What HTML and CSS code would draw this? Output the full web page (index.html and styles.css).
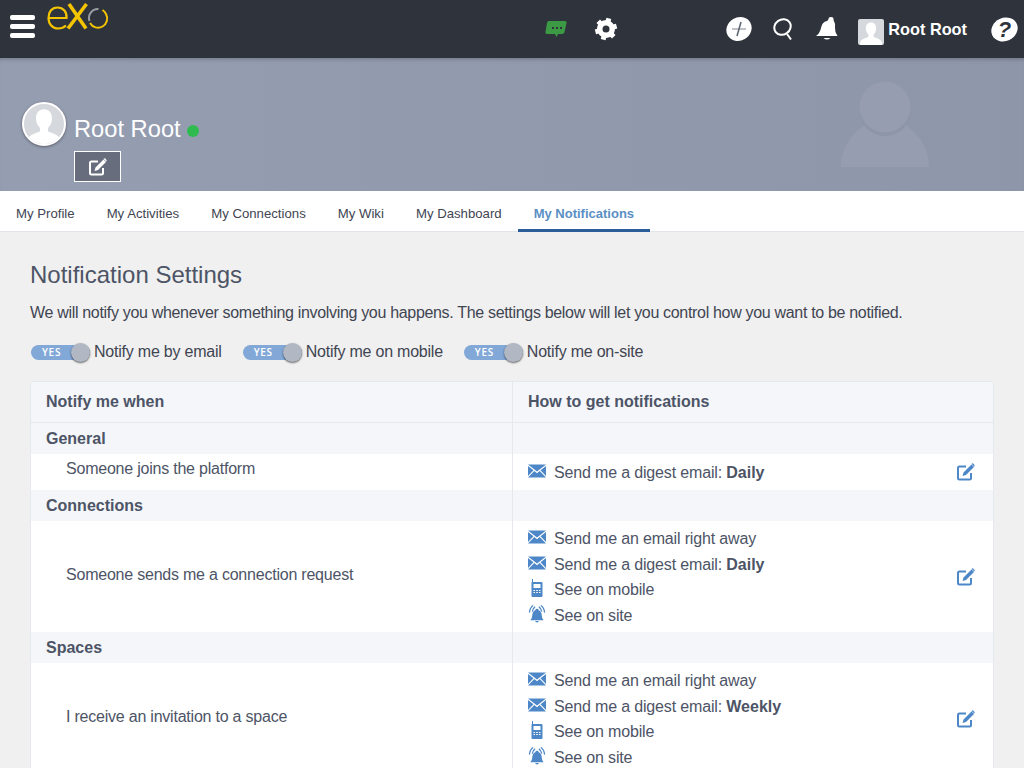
FILE: index.html
```html
<!DOCTYPE html>
<html lang="en">
<head>
	<meta charset="UTF-8">
	<title>Notification Settings</title>
	<link rel="stylesheet" href="styles.css">
</head>
<body>
	<svg class="defs" width="0" height="0">
		<symbol id="mail" viewBox="0 0 18 13">
			<path d="M0 0h18L9 7z"/>
			<path d="M0 1.500v10l5.500-5.700zM18 1.500v10l-5.500-5.700zM6.300 6.600L9 8.800l2.700-2.200L18 13H0z"/>
		</symbol>
		<symbol id="phone" viewBox="0 0 14 18">
			<path fill-rule="evenodd" d="M2 0h1v3h8.500q1 0 1 1v13q0 1-1 1h-9q-1 0-1-1V4q0-.7.500-.9zM3.500 5v4h7V5zM3.500 11v1h1.500v-1zM6.200 11v1h1.600v-1zM9 11v1h1.500v-1zM3.500 13v1h1.500v-1zM6.200 13v1h1.600v-1zM9 13v1h1.500v-1z"/>
		</symbol>
		<symbol id="alarm" viewBox="0 0 18 19">
			<path d="M9 4q1.500 0 1.800 1.500Q14 7 14 11q0 3 2 5H2q2-2 2-5 0-4 3.200-5.500Q7.500 4 9 4zM7 17h4q-.5 1.500-2 1.500T7 17z"/>
			<path class="wave" d="M4 7Q4.500 3.500 7 2M14 7q-.5-3.500-3-5M1 8Q1.500 2.500 5 .5M17 8q-.5-5.500-4-7.500"/>
		</symbol>
		<symbol id="edit" viewBox="0 0 18 18">
			<path class="box" d="M14 10v5q0 1.500-1.500 1.500h-10Q1 16.500 1 15V5q0-1.500 1.500-1.500H9"/>
			<path d="M14.500 1.500l2.500 2.500-8 8-3.500 1 1-3.500zM15 .6q.6-.6 1.200 0l1.300 1.300q.5.6 0 1.200l-.4.4-2.500-2.500z"/>
		</symbol>
		<symbol id="person" viewBox="0 0 60 60">
			<path d="M30 8c-8 0-12 6-12 14 0 6 3 11 6 14v5c-4 3-16 4-19 13v6h50v-6c-3-9-15-10-19-13v-5c3-3 6-8 6-14 0-8-4-14-12-14z"/>
		</symbol>
	</svg>

	<header class="topbar">
		<div class="top-left">
			<div class="burger"><i></i><i></i><i></i></div>
			<svg class="logo" width="62" height="32" viewBox="0 0 62 32">
				<path d="M1.500 18h18c.5-6-3-10.500-9-10.500S1.500 12 1.500 18s4 10.500 9.500 10.500c3 0 6-1 8-3" fill="none" stroke="#f5c400" stroke-width="2.200"/>
				<path d="M22 4l17 24.500M39.500 4L21 28.500" fill="none" stroke="#f5c400" stroke-width="3.600"/>
				<path d="M42.500 21a9 9 0 0 1 9-12" fill="none" stroke="#9a9da3" stroke-width="2"/>
				<path d="M43 23a9 9 0 0 0 16-9 9 9 0 0 0-3.500-4" fill="none" stroke="#f5c400" stroke-width="2"/>
			</svg>
		</div>
		<div class="top-mid">
			<svg class="chat" width="22" height="18" viewBox="0 0 22 18">
				<path d="M4 1h16q2 0 1.500 2l-2 9q-.5 2-2.500 2h-4l-1.500 3-1.500-3H2q-2 0-1.500-2l1.500-9q.3-2 2-2z" fill="#3c9a45"/>
				<path d="M7 7h2v2H7zM11 7h2v2h-2zM15 7h2v2h-2z" fill="#2f343c"/>
			</svg>
			<svg class="gear" width="24" height="24" viewBox="0 0 24 24">
				<circle cx="12" cy="12" r="6.500" fill="none" stroke="#fff" stroke-width="5"/>
				<g transform="rotate(15 12 12)">
					<path d="M12 12L12 1M12 12L21.500 6.500M12 12L21.500 17.500M12 12L12 23M12 12L2.500 17.500M12 12L2.500 6.500" stroke="#fff" stroke-width="5"/>
				</g>
				<circle cx="12" cy="12" r="3.500" fill="#2f343c"/>
			</svg>
		</div>
		<div class="top-right">
			<svg width="26" height="26" viewBox="0 0 26 26">
				<ellipse cx="13" cy="13" rx="13" ry="11.500" transform="rotate(-30 13 13)" fill="#fff"/>
				<path d="M6 13h14" stroke="#a9adb3" stroke-width="1.500"/>
				<path d="M15 6l-4 14" stroke="#5b6270" stroke-width="1.500"/>
			</svg>
			<svg class="t-search" width="20" height="24" viewBox="0 0 20 24">
				<ellipse cx="9.500" cy="10" rx="8.500" ry="7.500" transform="rotate(-35 9.500 10)" fill="none" stroke="#fff" stroke-width="2"/>
				<path d="M14 17l4 5.500" stroke="#fff" stroke-width="2"/>
			</svg>
			<svg class="t-bell" width="22" height="26" viewBox="0 0 22 26">
				<path d="M15 1q3 0 2.500 3 2 3 1.500 8-.3 4 2.500 8H0q4-3 5-8 1-6 6-7 1.500-1 2-3.500z" fill="#fff"/>
				<path d="M7.500 22h7q-3.500 3-7 0z" fill="#fff"/>
			</svg>
			<div class="t-user">
				<svg class="t-avatar" width="26" height="26" viewBox="0 0 60 60"><use href="#person"/></svg>
				<span class="t-name">Root Root</span>
			</div>
			<div class="t-help"><span>?</span></div>
		</div>
	</header>

	<section class="banner">
		<svg class="ghost" width="88" height="88" viewBox="0 0 88 88">
			<path d="M0 86c0-22 14-36 26-44 10 9 26 9 36 0 12 8 26 22 26 44z" fill="#969db0"/>
			<circle cx="44" cy="29" r="26" fill="#8d95a8"/>
			<circle cx="44" cy="26" r="25.500" fill="#969db0"/>
		</svg>
		<div class="who">
			<div class="avatar">
				<svg width="40" height="40" viewBox="0 0 60 60"><use href="#person"/></svg>
			</div>
			<div class="who-text">
				<div class="who-name">Root Root<span class="dot"></span></div>
				<div class="edit-btn"><svg width="18" height="18"><use href="#edit"/></svg></div>
			</div>
		</div>
	</section>

	<nav class="tabs">
		<a>My Profile</a>
		<a>My Activities</a>
		<a>My Connections</a>
		<a>My Wiki</a>
		<a>My Dashboard</a>
		<a class="active">My Notifications</a>
	</nav>

	<main class="content">
		<h1>Notification Settings</h1>
		<p class="intro">We will notify you whenever something involving you happens. The settings below will let you control how you want to be notified.</p>
		<div class="switches">
			<div class="switch"><span class="toggle"><b>YES</b><i></i></span>Notify me by email</div>
			<div class="switch"><span class="toggle"><b>YES</b><i></i></span>Notify me on mobile</div>
			<div class="switch"><span class="toggle"><b>YES</b><i></i></span>Notify me on-site</div>
		</div>

		<div class="grid">
			<div class="row head">
				<div class="cell">Notify me when</div>
				<div class="cell">How to get notifications</div>
			</div>

			<div class="row group">
				<div class="cell">General</div>
				<div class="cell"></div>
			</div>
			<div class="row item">
				<div class="cell label up">Someone joins the platform</div>
				<div class="cell how short">
					<ul>
						<li><svg class="ic"><use href="#mail"/></svg>Send me a digest email: <b>Daily</b></li>
					</ul>
					<svg class="pen"><use href="#edit"/></svg>
				</div>
			</div>

			<div class="row group">
				<div class="cell">Connections</div>
				<div class="cell"></div>
			</div>
			<div class="row item">
				<div class="cell label">Someone sends me a connection request</div>
				<div class="cell how">
					<ul>
						<li><svg class="ic"><use href="#mail"/></svg>Send me an email right away</li>
						<li><svg class="ic"><use href="#mail"/></svg>Send me a digest email: <b>Daily</b></li>
						<li><svg class="ic"><use href="#phone"/></svg>See on mobile</li>
						<li><svg class="ic"><use href="#alarm"/></svg>See on site</li>
					</ul>
					<svg class="pen"><use href="#edit"/></svg>
				</div>
			</div>

			<div class="row group">
				<div class="cell">Spaces</div>
				<div class="cell"></div>
			</div>
			<div class="row item">
				<div class="cell label">I receive an invitation to a space</div>
				<div class="cell how">
					<ul>
						<li><svg class="ic"><use href="#mail"/></svg>Send me an email right away</li>
						<li><svg class="ic"><use href="#mail"/></svg>Send me a digest email: <b>Weekly</b></li>
						<li><svg class="ic"><use href="#phone"/></svg>See on mobile</li>
						<li><svg class="ic"><use href="#alarm"/></svg>See on site</li>
					</ul>
					<svg class="pen"><use href="#edit"/></svg>
				</div>
			</div>
		</div>
	</main>
</body>
</html>
```

FILE: styles.css
```css
*{
	margin:0;
	padding:0;
	box-sizing:border-box;
	list-style:none;
}
html,body{
	height:768px;
	overflow:hidden;
}
body{
	font-family:"Liberation Sans",Arial,sans-serif;
	font-size:16px;
	color:#4d5466;
	background:#f0f0f0;
}
.defs{
	position:absolute;
}

/* top bar */
.topbar{
	height:58px;
	background:#2f343c;
	display:flex;
	position:relative;
	z-index:2;
}
.top-left{
	display:flex;
	width:545px;
	padding-left:10px;
}
.burger{
	width:25px;
	padding-top:15px;
}
.burger i{
	display:block;
	height:5px;
	background:#fff;
	border-radius:2px;
	margin-bottom:4px;
}
.logo{
	margin-left:12px;
}
.top-mid{
	display:flex;
	align-items:center;
	gap:27px;
	height:58px;
}
.top-right{
	display:flex;
	align-items:center;
	margin-left:auto;
	padding-right:6px;
	color:#fff;
}
.t-search{
	margin-left:21px;
}
.t-bell{
	margin-left:23px;
}
.t-user{
	display:flex;
	align-items:flex-start;
	margin-left:20px;
	margin-top:6px;
}
.t-avatar{
	background:#d5d8dc;
	fill:#fff;
	border-radius:2px;
}
.t-name{
	font-size:16.300px;
	font-weight:bold;
	margin-left:4px;
	line-height:20px;
}
.t-help{
	width:27px;
	height:23px;
	margin-left:24px;
	border-radius:50%;
	background:#fff;
	color:#2f343c;
	font-size:22px;
	font-weight:bold;
	font-style:italic;
	text-align:center;
	line-height:23px;
	transform:rotate(-25deg);
}
.t-help span{
	display:block;
	transform:rotate(25deg);
}

/* banner */
.banner{
	height:133px;
	background:linear-gradient(90deg,#959db1,#8e96a9);
	box-shadow:inset 0 4px 4px -3px rgba(0,0,0,.25);
	position:relative;
	padding:44px 0 0 22px;
}
.ghost{
	position:absolute;
	right:95px;
	top:23px;
}
.who{
	display:flex;
}
.avatar{
	width:44px;
	height:44px;
	border:2px solid #fff;
	border-radius:50%;
	background:#d5d8dc;
	fill:#fff;
	overflow:hidden;
	box-shadow:0 1px 3px rgba(0,0,0,.4);
	display:flex;
	justify-content:center;
}
.who-text{
	margin-left:8px;
	padding-top:12px;
}
.who-name{
	font-size:23.700px;
	line-height:30px;
	color:#fff;
	display:flex;
	align-items:center;
}
.dot{
	width:12px;
	height:12px;
	border-radius:50%;
	background:#2fbb4f;
	margin-left:6px;
	margin-top:3px;
}
.edit-btn{
	width:47px;
	height:31px;
	margin-top:7px;
	background:#686d7d;
	border:1px solid #fff;
	display:flex;
	align-items:center;
	justify-content:center;
	color:#fff;
}
.edit-btn svg{
	fill:#fff;
}
.box{
	fill:none;
	stroke:currentColor;
	stroke-width:2;
}

/* tabs */
.tabs{
	height:41px;
	background:#fff;
	border-bottom:1px solid #e1e4e8;
	display:flex;
}
.tabs a{
	font-size:13.200px;
	line-height:46px;
	height:41px;
	padding:0 16px;
	color:#414552;
}
.tabs a.active{
	color:#5a8fc4;
	font-weight:bold;
	font-size:13px;
	border-bottom:3px solid #2b5e99;
}

/* content */
.content{
	padding:0 30px;
}
h1{
	font-size:24px;
	font-weight:normal;
	line-height:30px;
	padding-top:28px;
	height:58px;
	color:#4d5466;
}
.intro{
	letter-spacing:-.32px;
	line-height:20px;
	margin-top:13px;
	color:#414552;
}
.switches{
	display:flex;
	gap:20px;
	margin-top:19px;
	height:20px;
	color:#414552;
	letter-spacing:-.22px;
}
.switch{
	display:flex;
	align-items:center;
	line-height:20px;
}
.toggle{
	position:relative;
	width:59px;
	height:15px;
	border-radius:8px;
	background:#82a8d7;
	margin:1px 4px 0 1px;
	display:block;
}
.toggle b{
	display:block;
	font-size:10px;
	font-weight:600;
	font-family:"Open Sans",sans-serif;
	letter-spacing:.7px;
	line-height:15px;
	color:#fff;
	padding-left:11px;
}
.toggle i{
	position:absolute;
	right:0;
	top:-2px;
	width:19px;
	height:19px;
	border-radius:50%;
	background:#b1b8c3;
	box-shadow:0 1px 2px rgba(0,0,0,.6);
}

/* settings grid */
.grid{
	margin-top:19px;
	border:1px solid #e5e8ed;
	border-radius:3px 3px 0 0;
}
.row{
	display:grid;
	grid-template-columns:481px 1fr;
}
.cell + .cell{
	border-left:1px solid #e5e8ed;
}
.head{
	height:41px;
	background:#f4f6fa;
	border-bottom:1px solid #e5e8ed;
	font-weight:bold;
	line-height:40px;
}
.head .cell{
	padding-left:15px;
}
.group{
	height:31px;
	background:#f4f6fa;
	font-weight:bold;
	line-height:32px;
}
.group .cell{
	padding-left:15px;
}
.item{
	background:#fff;
}
.label{
	letter-spacing:-.22px;
	padding-left:35px;
	display:flex;
	align-items:center;
	padding-bottom:4px;
}
.label.up{
	padding-bottom:6px;
}
.how{
	display:flex;
	justify-content:space-between;
	align-items:center;
	padding:7px 18px 5px 15px;
	height:111px;
}
.how.short{
	height:36px;
	padding-top:2px;
	padding-bottom:0;
}
.how li{
	display:flex;
	align-items:center;
	height:25.400px;
	white-space:pre;
	letter-spacing:-.16px;
	color:#4d5466;
}
.how li b{
	letter-spacing:0;
}
.ic{
	width:18px;
	height:18px;
	margin-right:8px;
	fill:#4d87c7;
	position:relative;
	top:-2px;
}
.wave{
	fill:none;
	stroke:#4d87c7;
	stroke-width:1.300;
}
.pen{
	width:18px;
	height:18px;
	fill:#4d87c7;
	color:#4d87c7;
	position:relative;
	top:-1px;
}
```
